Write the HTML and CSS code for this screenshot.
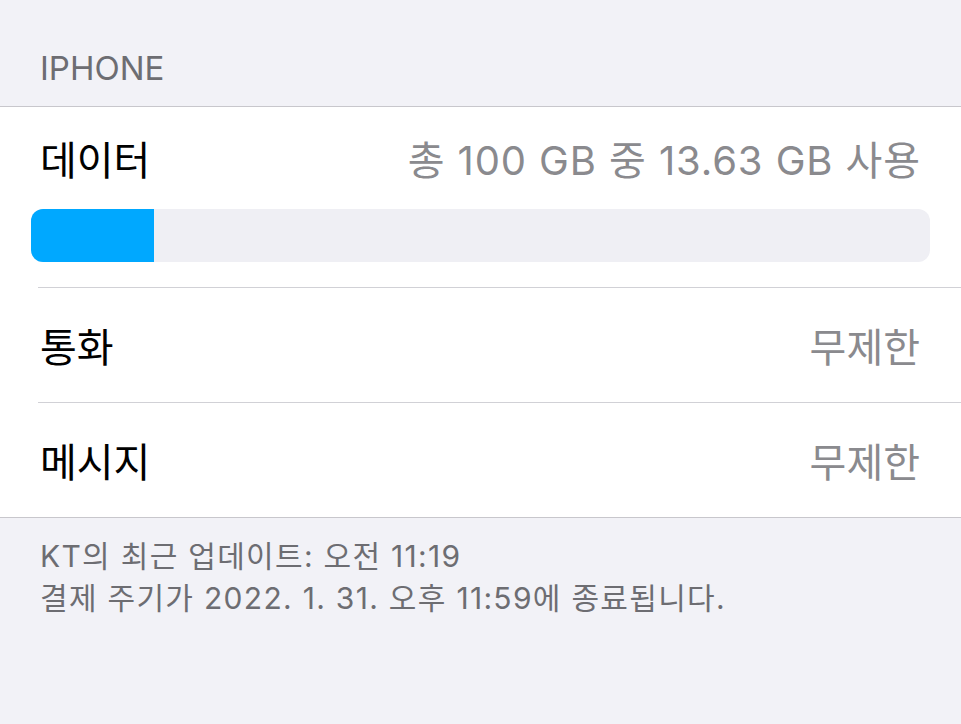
FILE: index.html
```html
<!DOCTYPE html>
<html lang="ko">
<head>
  <meta charset="UTF-8">
  <meta name="viewport" content="width=device-width, initial-scale=1.0">
  <title>셀룰러 요금제</title>
  <link rel="stylesheet" href="styles.css">
</head>
<body>
  <div class="section-title">IPHONE</div>

  <div class="group">
    <div class="data-cell">
      <div class="cell-head">
        <span class="label">데이터</span>
        <span class="value usage">총 100 GB 중 13.63 GB 사용</span>
      </div>
      <div class="bar">
        <div class="bar-fill" style="width: 13.63%;"></div>
      </div>
    </div>

    <div class="row">
      <span class="label">통화</span>
      <span class="value">무제한</span>
    </div>

    <div class="row">
      <span class="label">메시지</span>
      <span class="value">무제한</span>
    </div>
  </div>

  <div class="footnote">
    <p>KT의 최근 업데이트: 오전 11:19</p>
    <p>결제 주기가 2022. 1. 31. 오후 11:59에 종료됩니다.</p>
  </div>
</body>
</html>
```

FILE: styles.css
```css
body {
  margin: 0;
  background: #f2f2f7;
  font-family: Inter, "Noto Sans CJK KR", sans-serif;
  color: #000;
}

.section-title {
  height: 106px;
  box-sizing: border-box;
  padding: 48px 0 0 40px;
  font-size: 33px;
  line-height: 40px;
  color: #6d6d72;
}

.group {
  background: #fff;
  border-top: 1px solid #c8c7cc;
  border-bottom: 1px solid #c8c7cc;
}

.data-cell {
  height: 180px;
  box-sizing: border-box;
  padding: 0 31px 25px 31px;
}

.cell-head {
  height: 102px;
  display: flex;
  align-items: center;
  justify-content: space-between;
  padding: 0 10px 0 9px;
}

.label {
  font-size: 40px;
}

.value {
  font-size: 40px;
  color: #8a8a8e;
}

.usage {
  letter-spacing: 0.9px;
  margin-right: -1px;
}

.bar {
  height: 53px;
  border-radius: 12px;
  background: #efeff4;
  overflow: hidden;
}

.bar-fill {
  height: 100%;
  background: #00a8ff;
}

.row {
  height: 115px;
  box-sizing: border-box;
  margin-left: 38px;
  padding: 0 41px 0 2px;
  border-top: 1px solid #d1d1d6;
  display: flex;
  align-items: center;
  justify-content: space-between;
}

.footnote {
  padding: 17px 0 0 40px;
  font-size: 30px;
  line-height: 42px;
  letter-spacing: 1.3px;
  color: #6d6d72;
}

.footnote p {
  margin: 0;
}
```
